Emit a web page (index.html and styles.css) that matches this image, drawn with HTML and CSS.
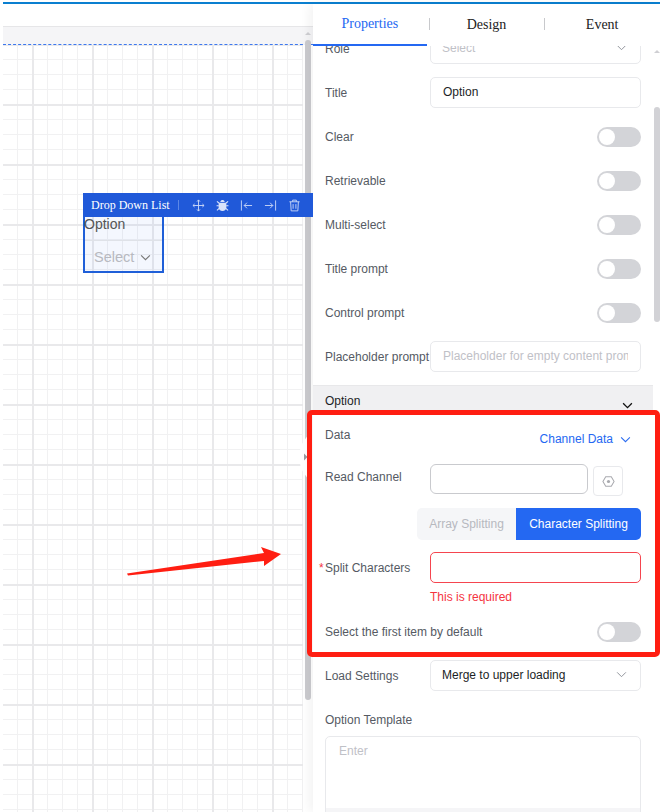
FILE: index.html
```html
<!DOCTYPE html>
<html lang="en">
<head>
<meta charset="utf-8">
<title>Drop Down List properties</title>
<link rel="stylesheet" href="styles.css">
</head>
<body>
<div class="app">
  <div class="topline"></div>
  <div class="main">
    <section class="stage">
      <div class="stage-top"></div>
      <div class="stage-head"></div>
      <div class="stage-body">
        <div class="canvas">
          <div class="widget-toolbar">
            <span class="widget-name">Drop Down List</span>
            <span class="widget-sep"></span>
            <svg class="tool" viewBox="0 0 14 14"><path d="M7 1v12M1 7h12M5.400 2.800 7 1l1.600 1.800M5.400 11.200 7 13l1.600-1.800M2.800 5.400 1 7l1.800 1.600M11.200 5.400 13 7l-1.800 1.600"/></svg>
            <svg class="tool tool-fill" viewBox="0 0 14 14"><path d="M4.600 3.200C5 1.900 5.900 1.200 7 1.200s2 .7 2.400 2zM3.600 4h6.800c.6.8.8 1.600.8 2.400v2.400c0 2.400-1.900 4-4.200 4s-4.200-1.600-4.200-4V6.400C2.800 5.600 3 4.800 3.600 4z"/><path class="tool-legs" d="M1 2.500 3.400 4.600M13 2.500l-2.400 2.100M.6 7.300h2.400M13.400 7.300H11M1 12.200l2.400-2.100M13 12.200l-2.400-2.100"/></svg>
            <svg class="tool" viewBox="0 0 14 14"><path d="M1.500 1.500v11M13 7H4.500M7.500 4 4.500 7l3 3"/></svg>
            <svg class="tool" viewBox="0 0 14 14"><path d="M12.500 1.500v11M1 7h8.500M6.500 4l3 3-3 3"/></svg>
            <svg class="tool" viewBox="0 0 14 14"><path d="M1.500 3h11M5 3V1.200h4V3M2.800 3l.6 9.800h7.200l.6-9.800M5.500 5.500v5M8.500 5.500v5"/></svg>
          </div>
          <div class="widget">
            <div class="widget-title">Option</div>
            <div class="widget-select">
              <span>Select</span>
              <svg class="chev chev-widget" viewBox="0 0 12 8"><path d="M1 1.500 6 6.500l5-5"/></svg>
            </div>
          </div>
          <svg class="arrow" viewBox="0 0 160 32"><polygon points="0,28.500 137,8 134,2 154,9 137,21 137,16 1,30.500"/></svg>
        </div>
        <div class="stage-scroll">
          <div class="scroll-thumb"></div>
        </div>
      </div>
      <svg class="collapse" viewBox="0 0 12 64"><path class="collapse-bg" d="M12 0C12 10 0 16 0 26v12c0 10 12 16 12 26z"/><path class="collapse-tri" d="M4 28.500 7.500 32 4 35.500z"/></svg>
    </section>

    <aside class="panel">
      <nav class="tabs">
        <span class="tab tab-on">Properties</span>
        <span class="tab">Design</span>
        <span class="tab">Event</span>
      </nav>
      <div class="panel-main">
        <div class="form">
          <div class="row row-first">
            <span class="label">Role</span>
            <div class="box box-select"><span class="ph">Select</span><svg class="chev" viewBox="0 0 12 8"><path d="M1 1.500 6 6.500l5-5"/></svg></div>
          </div>
          <div class="row">
            <span class="label">Title</span>
            <div class="box"><span class="val">Option</span></div>
          </div>
          <div class="row"><span class="label">Clear</span><span class="toggle"></span></div>
          <div class="row"><span class="label">Retrievable</span><span class="toggle"></span></div>
          <div class="row"><span class="label">Multi-select</span><span class="toggle"></span></div>
          <div class="row"><span class="label">Title prompt</span><span class="toggle"></span></div>
          <div class="row"><span class="label">Control prompt</span><span class="toggle"></span></div>
          <div class="row">
            <span class="label">Placeholder prompt</span>
            <div class="box"><span class="ph ph-clip">Placeholder for empty content prompt</span></div>
          </div>
          <div class="section-head">
            <span>Option</span>
            <svg class="chev chev-dark" viewBox="0 0 12 8"><path d="M1 1.500 6 6.500l5-5"/></svg>
          </div>
          <div class="section">
            <div class="row row-top row-data">
              <span class="label">Data</span>
              <div class="link-select"><span>Channel Data</span><svg class="chev chev-blue" viewBox="0 0 12 8"><path d="M1 1.500 6 6.500l5-5"/></svg></div>
            </div>
            <div class="row row-top row-channel">
              <span class="label">Read Channel</span>
              <div class="channel">
                <div class="box box-strong"></div>
                <span class="icon-btn"><svg class="hex" viewBox="0 0 14 14"><path class="hex-line" d="M4 1.800h6L13 7l-3 5.200H4L1 7z"/><circle cx="7" cy="7" r="1.700"/></svg></span>
              </div>
            </div>
            <div class="segment">
              <span class="seg seg-off">Array Splitting</span>
              <span class="seg seg-on">Character Splitting</span>
            </div>
            <div class="row row-split">
              <span class="label label-req">Split Characters</span>
              <div class="box box-err"></div>
            </div>
            <div class="err">This is required</div>
            <div class="row row-firstitem"><span class="label">Select the first item by default</span><span class="toggle"></span></div>
            <div class="row">
              <span class="label">Load Settings</span>
              <div class="box box-select"><span class="val">Merge to upper loading</span><svg class="chev" viewBox="0 0 12 8"><path d="M1 1.500 6 6.500l5-5"/></svg></div>
            </div>
            <div class="label tpl-label">Option Template</div>
            <div class="textarea">
              <span class="ph">Enter</span>
              <div class="textarea-foot"></div>
            </div>
          </div>
        </div>
        <div class="panel-scroll">
          <div class="scroll-up"></div>
          <div class="scroll-thumb scroll-thumb-panel"></div>
        </div>
      </div>
    </aside>
  </div>
  <div class="annotation"></div>
</div>
</body>
</html>
```
FILE: styles.css
```css
* { box-sizing: border-box; }
html, body { margin: 0; padding: 0; }
body {
  font-family: "Liberation Sans", Arial, sans-serif;
  font-size: 12px;
  color: #555a63;
  background: #fff;
}
.app {
  position: relative;
  width: 660px;
  height: 812px;
  overflow: hidden;
  display: flex;
  flex-direction: column;
  background: #fff;
}
.topline {
  height: 2px;
  margin: 2px 0 0 3px;
  background: #0a7fd0;
  flex: none;
}
.main { flex: 1; display: flex; min-height: 0; }

/* stage */
.stage {
  position: relative;
  width: 313px;
  flex: none;
  display: flex;
  flex-direction: column;
  padding-left: 3px;
}
.stage-top { height: 22px; flex: none; }
.stage-head {
  position: relative;
  height: 19px;
  flex: none;
  background: #f5f5f7;
  border-top: 1px solid #e6e6e8;
  border-bottom: 1px dashed #3d78ee;
}
.stage-head::after {
  content: "";
  position: absolute;
  right: 2px;
  top: 5px;
  border: 3px solid transparent;
  border-top: 0;
  border-bottom: 3px solid #cfcfd3;
}
.stage-body { flex: 1; display: flex; min-height: 0; }
.canvas {
  position: relative;
  flex: 1;
  min-width: 0;
  background-color: #fff;
  background-image:
    linear-gradient(90deg, #e9e9eb 2px, transparent 2px),
    linear-gradient(0deg, transparent calc(100% - 2px), #e9e9eb calc(100% - 2px)),
    linear-gradient(90deg, #f1f1f2 1px, transparent 1px),
    linear-gradient(0deg, transparent calc(100% - 1px), #f1f1f2 calc(100% - 1px));
  background-size: 60px 60px, 60px 60px, 15px 15px, 15px 15px;
  background-position: 29px 59px, 29px 59px, 14px 14px, 14px 14px;
}
.stage-scroll {
  position: relative;
  width: 10px;
  flex: none;
}
.stage-scroll .scroll-thumb {
  position: absolute;
  left: 2px;
  top: -5px;
  width: 6px;
  height: 660px;
  background: #cbcbcf;
  border-radius: 3px;
}
.collapse {
  position: absolute;
  left: 300px;
  top: 421px;
  width: 12px;
  height: 64px;
}
.collapse-bg { fill: #fff; }
.collapse-tri { fill: #9a9aa0; }

/* widget on the canvas */
.widget-toolbar {
  position: absolute;
  left: 80px;
  top: 148px;
  width: 230px;
  height: 24px;
  padding-left: 8px;
  display: flex;
  align-items: center;
  background: #2059d9;
  color: #fff;
  z-index: 2;
}
.widget-name {
  font-family: "Liberation Serif", "Times New Roman", serif;
  font-size: 12px;
  width: 80px;
  white-space: nowrap;
}
.widget-sep {
  width: 1px;
  height: 10px;
  margin: 0 13px 0 7px;
  background: #5c88e6;
}
.tool {
  width: 13px;
  height: 13px;
  margin-right: 11px;
  flex: none;
  fill: none;
  stroke: #c9d7f7;
  stroke-width: 1;
}
.tool-fill { fill: #d9e3fa; stroke: none; }
.tool-legs { fill: none; stroke: #d9e3fa; stroke-width: 1.200; }
.widget {
  position: absolute;
  left: 80px;
  top: 171px;
  width: 81px;
  height: 57px;
  border: 2px solid #1f5fd8;
  border-top: 0;
  background: rgba(36, 104, 242, .05);
}
.widget-title {
  height: 25px;
  padding-left: 0;
  text-indent: -1px;
  font-size: 14px;
  line-height: 17px;
  color: #555;
  border-bottom: 1px solid #dfe2e8;
  white-space: nowrap;
}
.widget-select {
  display: flex;
  align-items: center;
  padding: 8px 0 0 9px;
  font-size: 14.500px;
  color: #b7b9c0;
}
.chev {
  width: 11px;
  height: 7px;
  flex: none;
  fill: none;
  stroke: #8f9299;
  stroke-width: 1.100;
}
.chev-widget { margin-left: 6px; stroke: #777; stroke-width: 1.300; }
.chev-dark { stroke: #111; stroke-width: 1.500; }
.chev-blue { stroke: #2b6cf0; stroke-width: 1.200; }
.arrow {
  position: absolute;
  left: 124px;
  top: 500px;
  width: 160px;
  height: 32px;
  fill: #ff1e12;
}

/* right panel */
.panel {
  position: relative;
  width: 347px;
  flex: none;
  display: flex;
  flex-direction: column;
  background: #fff;
  box-shadow: -4px 0 10px rgba(0, 0, 0, .05);
}
.tabs {
  height: 42px;
  flex: none;
  display: flex;
  position: relative;
  z-index: 1;
  background: #fff;
}
.tab {
  position: relative;
  width: 116px;
  display: flex;
  align-items: center;
  justify-content: center;
  padding-bottom: 1px;
  font-family: "Liberation Serif", "Times New Roman", serif;
  font-size: 14px;
  color: #222;
}
.tab + .tab::before {
  content: "";
  position: absolute;
  left: 0;
  top: 14px;
  width: 1px;
  height: 12px;
  background: #c8c9cc;
}
.tab-on {
  width: 114px;
  margin-right: 2px;
  padding-bottom: 0;
  color: #2468f2;
  border-bottom: 2px solid #2468f2;
}
.panel-main { flex: 1; min-height: 0; display: flex; }
.form {
  width: 340px;
  flex: none;
  padding: 0 12px;
  overflow: hidden;
}
.panel-scroll { position: relative; flex: 1; }
.panel-scroll .scroll-up {
  position: absolute;
  left: 1px;
  top: 4px;
  border: 3px solid transparent;
  border-top: 0;
  border-bottom: 3px solid #cfcfd3;
}
.scroll-thumb-panel {
  position: absolute;
  left: 1px;
  top: 61px;
  width: 6px;
  height: 215px;
  background: #d2d2d6;
  border-radius: 3px;
}
.row {
  display: grid;
  grid-template-columns: 105px minmax(0, 1fr);
  align-items: center;
  height: 31px;
  margin-bottom: 13px;
}
.row-first { margin-top: -13px; }
.label { white-space: nowrap; }
.box {
  min-width: 0;
  height: 31px;
  display: flex;
  align-items: center;
  padding: 0 12px 2px;
  border: 1px solid #e8e9ec;
  border-radius: 5px;
  background: #fff;
}
.box-select { justify-content: space-between; padding: 0 13px 2px 11px; }
.ph { color: #bfc1c7; white-space: nowrap; }
.ph-clip { overflow: hidden; display: block; width: 100%; }
.val { color: #1c1f26; }
.toggle {
  position: relative;
  justify-self: end;
  width: 44px;
  height: 20px;
  border-radius: 10px;
  background: #d3d4d8;
}
.toggle::after {
  content: "";
  position: absolute;
  left: 2px;
  top: 2px;
  width: 16px;
  height: 16px;
  border-radius: 50%;
  background: #fff;
}
.section-head {
  display: flex;
  justify-content: space-between;
  height: 30px;
  margin: 0 -12px;
  padding: 8px 20px 0 12px;
  background: #f0f0f2;
  border-top: 1px solid #e8e8ea;
  color: #1c1f26;
}
.section-head .chev { margin-top: 8px; }
.section { padding-top: 8px; }
.row-top { align-items: start; line-height: 24px; }
.row-data { margin-bottom: 11px; }
.link-select {
  display: flex;
  align-items: center;
  justify-content: flex-end;
  height: 31px;
  padding: 1px 10px 0 0;
  color: #2468f2;
}
.link-select .chev { margin-left: 7px; }
.row-channel { margin-bottom: 12px; }
.channel { display: flex; align-items: flex-start; gap: 5px; }
.box-strong {
  flex: 1;
  height: 30px;
  margin-top: -1px;
  border-color: #c9cace;
  border-radius: 6px;
}
.icon-btn {
  width: 30px;
  height: 30px;
  margin-top: 1px;
  margin-right: 18px;
  flex: none;
  display: flex;
  align-items: center;
  justify-content: center;
  border: 1px solid #e8e9ec;
  border-radius: 4px;
}
.hex { width: 13px; height: 13px; fill: #a8a9ae; }
.hex-line { fill: none; stroke: #a8a9ae; stroke-width: 1.100; }
.segment {
  display: flex;
  width: 224px;
  height: 32px;
  margin: 0 0 12px 92px;
  border-radius: 5px;
  overflow: hidden;
}
.seg { display: flex; align-items: center; justify-content: center; white-space: nowrap; }
.seg-off { width: 99px; background: #f5f6f8; color: #b7b9bf; }
.seg-on { flex: 1; background: #2468f2; color: #fff; }
.row-split { margin-bottom: 4px; }
.label-req { position: relative; }
.label-req::before {
  content: "*";
  position: absolute;
  left: -6px;
  top: 0;
  color: #f5343f;
}
.box-err { border-color: #f5454f; }
.err {
  height: 20px;
  margin-left: 105px;
  line-height: 20px;
  color: #f5343f;
}
.row-firstitem { margin: 9px 0 13px; }
.tpl-label { height: 20px; line-height: 20px; margin-top: 19px; }
.textarea {
  position: relative;
  height: 90px;
  margin-top: 6px;
  padding: 7px 13px;
  border: 1px solid #e8e9ec;
  border-radius: 5px;
}
.textarea-foot {
  position: absolute;
  left: 0;
  right: 0;
  top: 71px;
  height: 20px;
  background: #f5f5f7;
}

/* red highlight drawn over the screenshot */
.annotation {
  position: absolute;
  left: 307px;
  top: 410px;
  width: 353px;
  height: 247px;
  border: 5px solid #ff1e12;
  border-radius: 5px;
  pointer-events: none;
}
```
